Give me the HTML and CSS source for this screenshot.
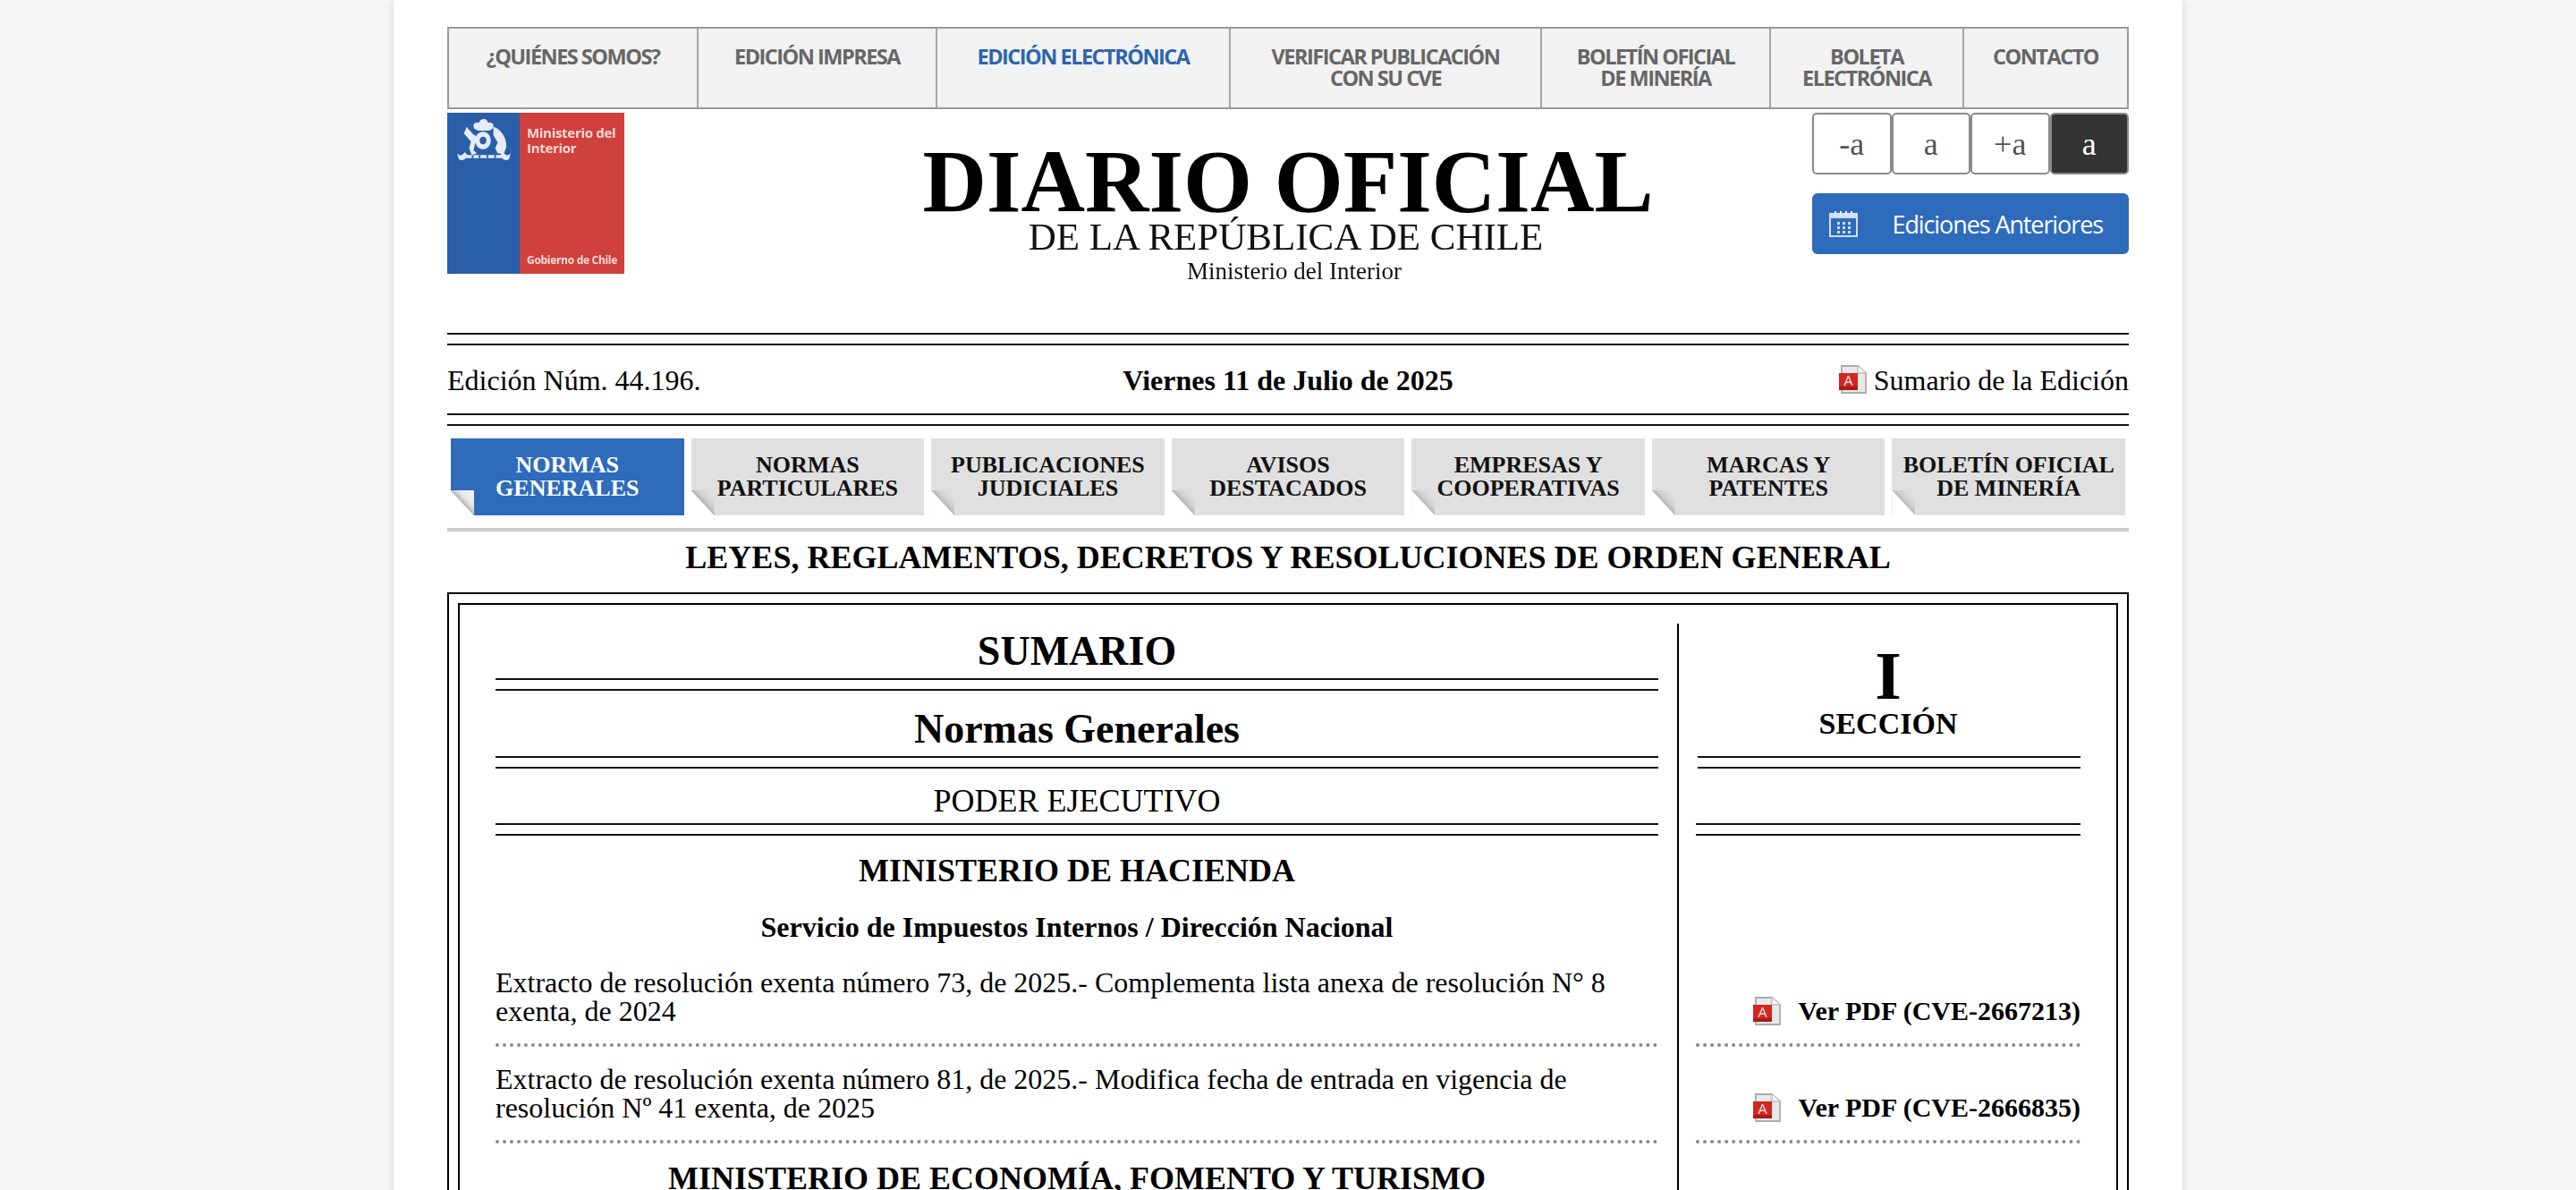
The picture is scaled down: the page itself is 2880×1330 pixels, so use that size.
FILE: index.html
```html
<!DOCTYPE html>
<html lang="es">
<head>
<meta charset="utf-8">
<title>Diario Oficial</title>
<link rel="stylesheet" href="styles.css">
</head>
<body>
<svg class="defs" width="0" height="0" aria-hidden="true">
  <symbol id="pdf" viewBox="0 0 31 32">
    <path d="M3 1h18l9 8v22H3z" fill="#e9e9e9" stroke="#ababab" stroke-width="1.8"/>
    <path d="M21 1v8h9" fill="#f8f8f8" stroke="#bdbdbd" stroke-width="1.4"/>
    <rect x="0" y="9" width="21" height="19" fill="#d3261f"/>
    <rect x="0" y="24" width="21" height="4" fill="#a91b17"/>
    <path d="M10.5 12 6 23M10.5 12 15 23M7.5 20q3-2 6 0" fill="none" stroke="#f6d5d2" stroke-width="1.5"/>
  </symbol>
</svg>
<div class="page">
  <nav class="topnav">
    <a class="topnav-item">¿QUIÉNES SOMOS?</a>
    <a class="topnav-item">EDICIÓN IMPRESA</a>
    <a class="topnav-item is-current">EDICIÓN ELECTRÓNICA</a>
    <a class="topnav-item">VERIFICAR PUBLICACIÓN<br>CON SU CVE</a>
    <a class="topnav-item">BOLETÍN OFICIAL<br>DE MINERÍA</a>
    <a class="topnav-item">BOLETA<br>ELECTRÓNICA</a>
    <a class="topnav-item">CONTACTO</a>
  </nav>

  <header class="masthead">
    <div class="gov-logo">
      <div class="gov-blue">
        <svg class="crest" viewBox="0 0 64 44" preserveAspectRatio="none" aria-hidden="true">
          <g fill="#e4ecf6">
            <path d="M32 0c3 0 4 2 5 4 3-1 6 0 6 3s-3 4-5 5H26c-3-1-6-2-6-5s3-4 6-3c1-2 3-4 6-4z"/>
            <path d="M12 8l8 8 5 2-3 7-2 7 4 3-6 2-3-7 2-7-8-8z"/>
            <path d="M43 8c8 2 15 10 15 20l-3 8-7-1-3-5 3-6-5-7z"/>
            <path fill-rule="evenodd" d="M31 13a9 9 0 1 1-.01 0zm0 5a4 4 0 1 0 .01 0z"/>
            <path d="M1 35c3 3 6 3 9-1l3 3h38l3-3c3 4 6 4 9 1l-2 6c-3 2-6 1-8-1H11c-2 2-5 3-8 1z"/>
          </g>
          <g fill="#2a5ea8"><rect x="18" y="37" width="2" height="3"/><rect x="26" y="37" width="2" height="3"/><rect x="35" y="37" width="2" height="3"/><rect x="44" y="37" width="2" height="3"/></g>
        </svg>
      </div>
      <div class="gov-red">
        <span class="gov-name">Ministerio del Interior</span>
        <span class="gov-foot">Gobierno de Chile</span>
      </div>
    </div>
    <div class="wordmark">
      <div class="wm-main">DIARIO OFICIAL</div>
      <div class="wm-sub">DE LA REPÚBLICA DE CHILE</div>
      <div class="wm-min">Ministerio del Interior</div>
    </div>
    <div class="tools">
      <div class="fontsizes">
        <button class="fs">-a</button>
        <button class="fs">a</button>
        <button class="fs">+a</button>
        <button class="fs is-active">a</button>
      </div>
      <a class="prev-btn">
        <svg class="cal" viewBox="0 0 32 30" aria-hidden="true">
          <rect x="1" y="4" width="30" height="25" fill="none" stroke="#cfe0f3" stroke-width="2"/>
          <path d="M1 5h30v4H1z" fill="#cfe0f3"/>
          <path d="M7 1v5M13 1v5M19 1v5M25 1v5" stroke="#e6eff9" stroke-width="2"/>
          <path d="M9 13h3v3H9zM15 13h3v3h-3zM21 13h3v3h-3zM9 18h3v3H9zM15 18h3v3h-3zM21 18h3v3h-3zM9 23h3v3H9zM15 23h3v3h-3zM21 23h3v3h-3z" fill="#cfe0f3"/>
        </svg>
        <span>Ediciones Anteriores</span>
      </a>
    </div>
  </header>

  <div class="edition">
    <span>Edición Núm. 44.196.</span>
    <strong class="edition-date">Viernes 11 de Julio de 2025</strong>
    <a class="edition-sum"><svg class="pdf"><use href="#pdf"/></svg>Sumario de la Edición</a>
  </div>

  <div class="tabs">
    <a class="tab is-active">NORMAS<br>GENERALES</a>
    <a class="tab">NORMAS<br>PARTICULARES</a>
    <a class="tab">PUBLICACIONES<br>JUDICIALES</a>
    <a class="tab">AVISOS<br>DESTACADOS</a>
    <a class="tab">EMPRESAS Y<br>COOPERATIVAS</a>
    <a class="tab">MARCAS Y<br>PATENTES</a>
    <a class="tab">BOLETÍN OFICIAL<br>DE MINERÍA</a>
  </div>

  <h1 class="section-title">LEYES, REGLAMENTOS, DECRETOS Y RESOLUCIONES DE ORDEN GENERAL</h1>

  <div class="box-outer">
    <div class="box-inner">
      <div class="sumario">
        <div class="cell-l">
          <h2 class="h-sumario">SUMARIO</h2>
          <div class="rule"></div>
          <h2 class="h-normas">Normas Generales</h2>
          <div class="rule"></div>
        </div>
        <div class="cell-r">
          <div class="sec-num">I</div>
          <div class="sec-label">SECCIÓN</div>
          <div class="rule rule-short"></div>
        </div>

        <div class="cell-l">
          <div class="h-poder">PODER EJECUTIVO</div>
          <div class="rule"></div>
        </div>
        <div class="cell-r cell-r-end"><div class="rule"></div></div>

        <div class="cell-l">
          <h3 class="h-min">MINISTERIO DE HACIENDA</h3>
          <h4 class="h-serv">Servicio de Impuestos Internos / Dirección Nacional</h4>
        </div>
        <div class="cell-r"></div>

        <div class="cell-l item">Extracto de resolución exenta número 73, de 2025.- Complementa lista anexa de resolución N° 8 exenta, de 2024</div>
        <div class="cell-r cell-r-end"><a class="pdf-link"><svg class="pdf"><use href="#pdf"/></svg>Ver PDF (CVE-2667213)</a></div>

        <div class="cell-l item">Extracto de resolución exenta número 81, de 2025.- Modifica fecha de entrada en vigencia de resolución Nº 41 exenta, de 2025</div>
        <div class="cell-r cell-r-end"><a class="pdf-link"><svg class="pdf"><use href="#pdf"/></svg>Ver PDF (CVE-2666835)</a></div>

        <div class="cell-l">
          <h3 class="h-min h-min-next">MINISTERIO DE ECONOMÍA, FOMENTO Y TURISMO</h3>
        </div>
        <div class="cell-r"></div>
      </div>
    </div>
  </div>
</div>
</body>
</html>
```
FILE: styles.css
```css
* { box-sizing: border-box; }
html, body { height: 100%; overflow: hidden; }
body { margin: 0; background: #f8f8f8; font-family: "Liberation Serif", "Times New Roman", serif; color: #000; font-size: 32px; }
.defs { position: absolute; }
h1, h2, h3, h4 { margin: 0; }

.page { width: 2000px; margin: 0 auto; min-height: 100%; padding: 30px 60px 40px; background: #fff; box-shadow: 0 0 10px rgba(0,0,0,.16); }

/* top nav */
.topnav { display: grid; grid-template-columns: 279px 267px 328px 348px 256px 216px 182px; height: 92px; background: #f2f2f2; border: 2px solid #999; }
.topnav-item { padding-top: 19px; text-align: center; font: 700 23.5px/24px "Open Sans", sans-serif; letter-spacing: -1.5px; color: #666; border-right: 2px solid #a5a5a5; }
.topnav-item:last-child { border-right: 0; }
.topnav-item.is-current { color: #2e64ad; }

/* masthead */
.masthead { display: grid; grid-template-columns: 1fr auto 1fr; margin-top: 4px; height: 246px; }
.gov-logo { display: flex; width: 198px; height: 180px; }
.gov-blue { width: 81px; background: #2a5ea8; padding: 7px 9px 0 10px; }
.crest { display: block; width: 62px; height: 48px; filter: blur(.6px); }
.gov-red { flex: 1; background: #d0413e; padding: 14px 0 7px 8px; display: flex; flex-direction: column; justify-content: space-between; color: #f7dcd9; font-family: "Open Sans", sans-serif; font-weight: 700; filter: blur(.4px); }
.gov-name { font-size: 15px; line-height: 17px; letter-spacing: -.3px; }
.gov-foot { font-size: 12px; line-height: 16px; letter-spacing: -.3px; }

.wordmark { text-align: center; padding-top: 37px; filter: blur(.5px); }
.wm-main { font-size: 99px; line-height: 80px; font-weight: 700; }
.wm-sub { font-size: 43px; line-height: 40px; margin-top: 2px; padding-right: 5px; color: #111; }
.wm-min { font-size: 27px; line-height: 30px; margin-top: 3px; padding-left: 14px; color: #111; }

.tools { justify-self: end; width: 354px; }
.fontsizes { display: grid; grid-template-columns: repeat(4, 1fr); height: 69px; }
.fs { padding: 0; border: 2px solid #8a8a8a; border-radius: 5px; background: #fff; color: #555; font: 36px/1 "Liberation Serif", serif; }
.fs.is-active { background: #333; color: #fff; }
.prev-btn { display: flex; align-items: center; justify-content: space-between; height: 68px; margin-top: 21px; padding: 0 29px 0 19px; background: #2e6bbb; border-radius: 6px; color: #fff; font: 27px "Open Sans", sans-serif; letter-spacing: -1.1px; }
.cal { width: 32px; height: 30px; }

/* edition */
.edition { display: grid; grid-template-columns: 1fr auto 1fr; align-items: center; height: 104px; padding-top: 2px; border-top: 2px solid #111; border-bottom: 2px solid #111; position: relative; }
.edition::before, .edition::after { content: ""; position: absolute; left: 0; right: 0; height: 2px; background: #111; }
.edition::before { top: 10px; }
.edition::after { bottom: 10px; }
.edition-sum { justify-self: end; display: flex; align-items: center; gap: 8px; }
.edition-sum .pdf { margin-top: -3px; }
.pdf { display: block; width: 31px; height: 32px; flex: none; }

/* tabs */
.tabs { display: flex; margin-top: 14px; padding-bottom: 14px; border-bottom: 4px solid #ccc; }
.tab { position: relative; flex: 1 1 0; margin: 0 4px; height: 86px; padding-top: 17px; background: #e0e0e0; text-align: center; font-size: 26px; line-height: 26px; font-weight: 700; color: #111; }
.tab.is-active { background: #2e6bbb; color: #fff; }
.tab::before { content: ""; position: absolute; left: 0; bottom: 0; width: 26px; height: 28px; background: #fff; clip-path: polygon(0 0, 100% 100%, 0 100%); }
.tab::after { content: ""; position: absolute; left: 0; bottom: 0; width: 26px; height: 28px; background: linear-gradient(to top right, #b4b4b4 48%, #e6e6e6 66%, #f2f2f2 85%); clip-path: polygon(0 0, 100% 0, 100% 100%); }
.tab:not(.is-active)::after { background: linear-gradient(to top right, #b0b0b0 48%, #cfcfcf 62%, #e0e0e0 85%); }

.section-title { font-size: 36px; line-height: 40px; text-align: center; padding-top: 9px; height: 68px; }

/* box */
.box-outer { border: 2px solid #000; padding: 10px; }
.box-inner { border: 2px solid #000; }
.sumario { display: grid; grid-template-columns: 1300px 512px; padding: 21px 0 0 40px; }
.cell-r { margin-left: 21px; border-left: 2px solid #000; padding: 0 40px 0 19px; }
.cell-r-end { display: flex; flex-direction: column; justify-content: flex-end; }
.rule { height: 14px; border-top: 2px solid #111; border-bottom: 2px solid #111; }
.rule-short { margin-left: 2px; }

.h-sumario { font-size: 46px; line-height: 60px; padding-top: 1px; text-align: center; }
.h-normas { font-size: 46px; line-height: 61px; padding-top: 12px; text-align: center; }
.h-poder { font-size: 36px; line-height: 49px; padding-top: 12px; text-align: center; }
.h-min { font-size: 36px; line-height: 36px; padding-top: 21px; text-align: center; }
.h-serv { font-size: 32px; line-height: 32px; padding: 29px 0 10px; text-align: center; }
.item { font-size: 32px; line-height: 32px; padding: 20px 0; border-bottom: 4px dotted #8a8a8a; }

.sec-num { font-size: 76px; line-height: 76px; font-weight: 700; text-align: center; padding-top: 20px; }
.sec-label { font-size: 34px; line-height: 40px; font-weight: 700; text-align: center; margin-top: -4px; height: 56px; }
.pdf-link { display: flex; justify-content: flex-end; align-items: flex-end; gap: 19px; font-size: 30px; font-weight: 700; line-height: 32px; padding-bottom: 20px; border-bottom: 4px dotted #8a8a8a; }
```
